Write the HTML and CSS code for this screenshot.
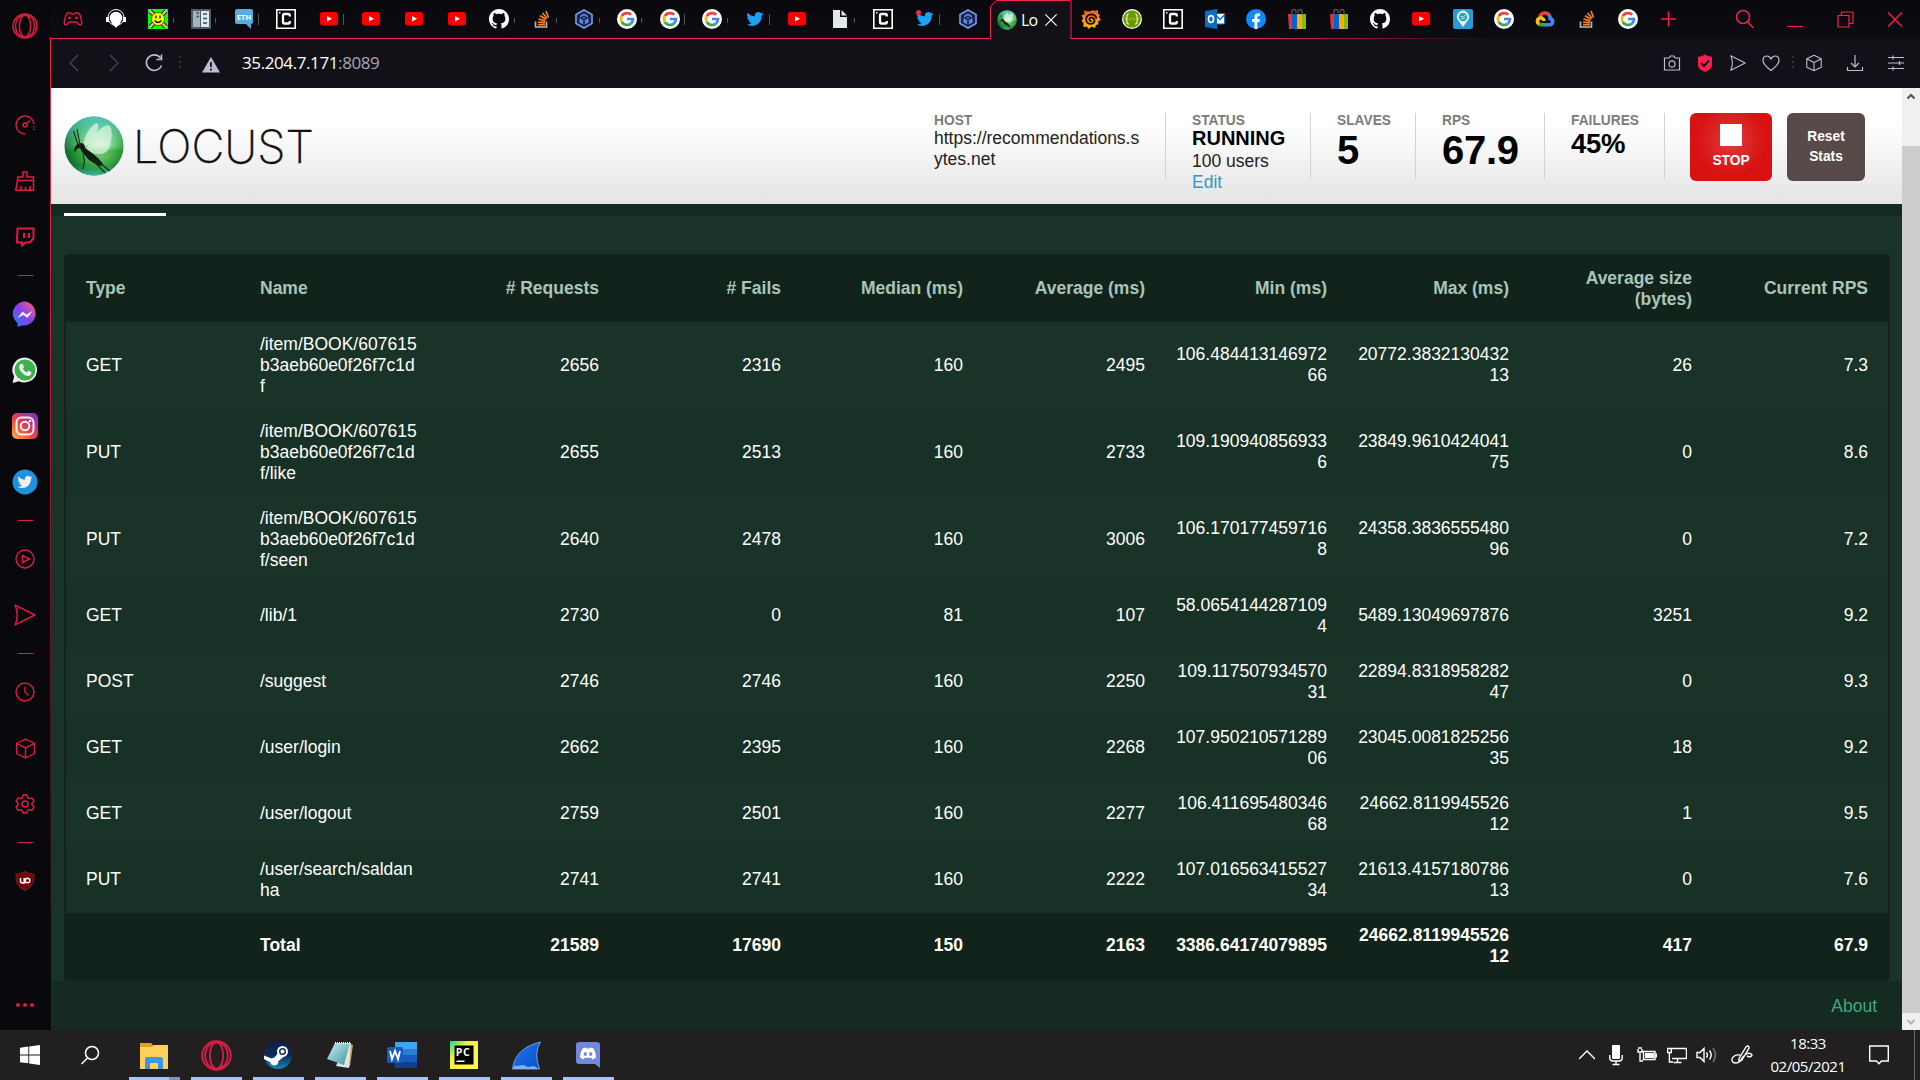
FILE: index.html
```html
<!DOCTYPE html>
<html lang="en">
<head>
<meta charset="utf-8">
<title>Locust</title>
<link rel="stylesheet" href="styles.css">
</head>
<body>
<svg class="sprite" width="0" height="0">
<defs>
<linearGradient id="gMsg" x1="0" y1="1" x2="1" y2="0"><stop offset="0" stop-color="#1488ff"/><stop offset=".5" stop-color="#8a3cf0"/><stop offset="1" stop-color="#ff6a6a"/></linearGradient>
<linearGradient id="gInsta" x1="0" y1="1" x2="1" y2="0"><stop offset="0" stop-color="#fdb845"/><stop offset=".4" stop-color="#ee4a3c"/><stop offset=".7" stop-color="#c02c8c"/><stop offset="1" stop-color="#6a3cc8"/></linearGradient>
<linearGradient id="gOrange" x1="0" y1="0" x2="0" y2="1"><stop offset="0" stop-color="#f05a28"/><stop offset="1" stop-color="#fbca0a"/></linearGradient>
<linearGradient id="gSteam" x1="0" y1="0" x2="0" y2="1"><stop offset="0" stop-color="#111d4e"/><stop offset=".5" stop-color="#0c2a55"/><stop offset="1" stop-color="#1387b8"/></linearGradient>
<linearGradient id="gPy" x1="0" y1="0" x2="1" y2="1"><stop offset="0" stop-color="#21d789"/><stop offset=".35" stop-color="#f5f04a"/><stop offset="1" stop-color="#fcf84a"/></linearGradient>
<linearGradient id="gNote" x1="0" y1="0" x2="1" y2="1"><stop offset="0" stop-color="#cdeef2"/><stop offset="1" stop-color="#3c94a4"/></linearGradient>
<linearGradient id="gFin" x1="0" y1="0" x2="1" y2="1"><stop offset="0" stop-color="#1f78f0"/><stop offset="1" stop-color="#0a4fc8"/></linearGradient>
<radialGradient id="gLoc" cx=".58" cy=".45" r=".56"><stop offset="0" stop-color="#dcf8d8"/><stop offset=".35" stop-color="#98dc9c"/><stop offset=".72" stop-color="#35a03f"/><stop offset="1" stop-color="#126040"/></radialGradient>
<linearGradient id="gTop" x1="0" y1="0" x2="0" y2="1"><stop offset="0" stop-color="#5fd0d8"/><stop offset=".5" stop-color="#5fd0a0" stop-opacity=".25"/><stop offset=".58" stop-color="#0a8a0a" stop-opacity=".5"/><stop offset=".82" stop-color="#20a830" stop-opacity=".2"/><stop offset="1" stop-color="#4fd0c8"/></linearGradient>
</defs>
<symbol id="opera" viewBox="0 0 26 26"><g fill="none" stroke="#e01b46" stroke-width="1.5"><ellipse cx="13" cy="13" rx="12" ry="12"/><ellipse cx="13" cy="13" rx="5.6" ry="11"/><path d="M15 2.2C25 4 25 22 15 23.8M11 2.2C1 4 1 22 11 23.8"/></g></symbol>
<symbol id="pad" viewBox="0 0 20 20"><path fill="none" stroke="#e01b46" stroke-width="1.4" d="M4.500 4h3l1 1h3l1-1h3l2 3 1.300 6.500c.2 3-2.400 3-3.600 1.200L13.500 13h-7l-1.700 1.700c-1.200 1.800-3.800 1.800-3.600-1.200L2.500 7z"/><circle cx="6.500" cy="9" r="1.400" fill="#e01b46"/><circle cx="13.500" cy="9" r="1.400" fill="#e01b46"/></symbol>
<symbol id="alien" viewBox="0 0 20 20"><circle cx="10" cy="8.500" r="8" fill="none" stroke="#fff"/><circle cx="10" cy="9" r="6.300" fill="#fff"/><path fill="#fff" d="M0 8h3v5H0zM17 8h3v5h-3zM5.500 14l9 0-3 3-1.500 2-1.500-2z"/></symbol>
<symbol id="smile" viewBox="0 0 20 20"><path fill="#0f0" d="M0 0h20v20H0z"/><path stroke="#222" stroke-width="4" d="M2 2l16 16M18 2L2 18"/><path stroke="#f4b8a0" stroke-width="2.300" d="M1.500 1.500l17 17M18.500 1.500l-17 17"/><circle cx="10" cy="10" r="6.500" fill="#ff0" stroke="#333" stroke-width=".7"/><path stroke="#111" fill="none" stroke-width="1.300" d="M8 6.500v3M12 6.500v3M6.500 11.500q3.500 4 7 0"/></symbol>
<symbol id="doc" viewBox="0 0 20 20"><path fill="#4c5e6a" d="M0 0h20v20H0z"/><path fill="#a4b4be" d="M2 2h7v16H2z"/><path fill="#e2e9ec" d="M10 2h8v16h-8z"/><path stroke="#3c4e5a" stroke-width="1.700" d="M5.500 4h2.500M5.500 7.500h2.500M12 5h4M12 9.500h4M12 14h4"/></symbol>
<symbol id="cc" viewBox="0 0 20 20"><path fill="#0a0a0d" stroke="#fff" stroke-width="1.600" d="M.8.8h18.400v18.400H.8z"/><path fill="none" stroke="#fff" stroke-width="2.300" d="M13.800 7.500V6.500q0-1.500-1.500-1.500H8.500Q7 5 7 6.500v6.500q0 1.500 1.500 1.500h3.800q1.500 0 1.500-1.500v-1"/><path fill="#fff" d="M3 3h1.500v1.500H3z"/></symbol>
<symbol id="yt" viewBox="0 0 20 20"><rect x="1" y="3" width="18" height="13.500" rx="3" fill="red"/><path fill="#fff" d="M8 7l5 2.800L8 12.600z"/></symbol>
<symbol id="gh" viewBox="0 0 16 16"><path fill="#fff" d="M8 0C3.580 0 0 3.580 0 8c0 3.540 2.290 6.530 5.470 7.590.4.070.55-.17.55-.38 0-.19-.01-.82-.01-1.490-2.010.37-2.530-.49-2.690-.94-.09-.23-.48-.94-.82-1.130-.28-.15-.68-.52-.01-.53.63-.01 1.080.58 1.230.82.72 1.210 1.870.87 2.330.66.07-.52.28-.87.51-1.070-1.780-.2-3.640-.89-3.640-3.950 0-.87.31-1.590.82-2.150-.08-.2-.36-1.020.08-2.120 0 0 .67-.21 2.200.82.64-.18 1.320-.27 2-.27s1.360.09 2 .27c1.530-1.040 2.200-.82 2.200-.82.44 1.100.16 1.920.08 2.120.51.56.82 1.270.82 2.150 0 3.070-1.870 3.750-3.650 3.950.29.25.54.73.54 1.480 0 1.070-.01 1.930-.01 2.200 0 .21.15.46.55.38A8.010 8.010 0 0 0 16 8c0-4.420-3.580-8-8-8z"/></symbol>
<symbol id="so" viewBox="0 0 20 20"><path fill="none" stroke="#b8b8b8" stroke-width="1.600" d="M3.500 12.500v5.500h11v-5.500"/><path stroke="#f48024" stroke-width="1.700" d="M6 15.700h7M6 13l7 .7M6.600 10l6.700 1.900M8 6.700l6 3.600M10.500 4l4.600 5.300M14 2l2.500 6.500"/></symbol>
<symbol id="hex" viewBox="0 0 20 20"><path fill="#182448" stroke="#7c9ae8" stroke-width="1.600" d="M10 1l8 4.500v9L10 19l-8-4.500v-9z"/><path fill="#5a86ee" d="M10 4.500l4 2.300v1.700l-4-2-4 2V6.800zM5.500 9l3.700 2v4.500l-3.700-2zM14.500 9l-3.700 2v4.500l3.700-2zM10 8l1.500.8L10 9.700l-1.500-.9z"/></symbol>
<symbol id="goog" viewBox="0 0 20 20"><circle cx="10" cy="10" r="10" fill="#fff"/><g fill="none" stroke-width="2.700"><path stroke="#ea4335" d="M14.200 5.800A6 6 0 0 0 4.800 7"/><path stroke="#fbbc05" d="M4.800 7a6 6 0 0 0 0 6"/><path stroke="#34a853" d="M4.800 13a6 6 0 0 0 9 1.600"/><path stroke="#4285f4" d="M13.800 14.600A6 6 0 0 0 16 10h-6"/></g></symbol>
<symbol id="bird" viewBox="0 0 24 24"><path d="M23.950 4.570a10 10 0 0 1-2.820.77 4.960 4.960 0 0 0 2.160-2.720c-.95.550-2 .950-3.130 1.180a4.920 4.920 0 0 0-8.380 4.480C7.690 8.090 4.070 6.130 1.640 3.160a4.920 4.920 0 0 0 1.520 6.570 4.900 4.900 0 0 1-2.230-.61v.06a4.920 4.920 0 0 0 3.950 4.830 5 5 0 0 1-2.210.08 4.940 4.940 0 0 0 4.600 3.420A9.870 9.870 0 0 1 0 19.540a13.990 13.990 0 0 0 7.550 2.210c9.050 0 14-7.500 14-13.980 0-.21 0-.42-.02-.63a9.940 9.940 0 0 0 2.460-2.550z"/></symbol>
<symbol id="tw" viewBox="0 0 20 20"><use href="#bird" x="1.500" y="1.500" width="17" height="17" fill="#1da1f2"/></symbol>
<symbol id="file" viewBox="0 0 20 20"><path fill="#e4e8ec" d="M3 1h7v7h7v11H3z"/><path fill="#e4e8ec" d="M11.500 1v5.500H17z"/></symbol>
<symbol id="loc" viewBox="0 0 60 60"><circle cx="30" cy="30" r="29.500" fill="url(#gLoc)"/><circle cx="30" cy="30" r="29.500" fill="url(#gTop)" opacity=".8"/><g fill="#eafbe8" opacity=".65"><path d="M19 31C20 18 29 7 33 7q4 3-4 16-5 7-10 8z"/><path d="M22 34C27 20 38 9 45 9q5 5 1 21-3 8-10 8-9 0-14-4z"/></g><path fill="#111d12" d="M11 31q2-4 7-4 3 1 3 5l7 5 6 5 5 6-2 2-4-1-8-5-7-8-2-4-3 1-2 3-1-2z"/><path fill="none" stroke="#17301c" stroke-width="1.200" d="M14 29L9.500 15M16 29l-3-16M19 38l1.500 8-2 7M28 43l13 14M32 44l14 11"/></symbol>
<symbol id="gra" viewBox="0 0 20 20"><path fill="url(#gOrange)" d="M10 2l2-1 1 1 4-1v3.500l2 1.500-1 2 2 3-2.500 1-.5 3.500-2 .5-1 3-3.500-1.500L7.500 20 6 17.500l-3.500.5v-4L.5 12 2 9.500.5 6 3.500 5.500 3 1.500l4 1z"/><path fill="none" stroke="#0b0b0f" stroke-width="1.700" d="M15.500 9.500q-1-4-5-4.200Q5.500 5.500 5 10.500q.5 4.500 5 4.500 3.500-.5 3.500-3.500-.5-3-3-3-2.500.5-2 2.500.5 1.500 2 1"/></symbol>
<symbol id="swag" viewBox="0 0 20 20"><circle cx="10" cy="10" r="10" fill="#fff"/><circle cx="10" cy="10" r="8.800" fill="#6b9a00"/><path stroke="#e4f0c0" fill="none" stroke-width="1.200" d="M7 5q-2 0-2 2v2l-1 1 1 1v2q0 2 2 2M13 5q2 0 2 2v2l1 1-1 1v2q0 2-2 2M7.300 10h1M9.500 10h1M11.700 10h1"/></symbol>
<symbol id="olk" viewBox="0 0 20 20"><path fill="#fff" stroke="#0a6cc4" d="M10 4.500h9.500v10.500H10z"/><path fill="none" stroke="#0a6cc4" stroke-width="1.500" d="M11 6.500l4 4 4.500-4.500"/><path fill="#0a6cc4" d="M0 2L12 0v20L0 18z"/><ellipse cx="6" cy="10" rx="2.500" ry="3.400" fill="none" stroke="#fff" stroke-width="1.600"/></symbol>
<symbol id="fb" viewBox="0 0 20 20"><circle cx="10" cy="10" r="10" fill="#1188f5"/><path fill="#fff" d="M8.500 20v-7H6v-3h2.500V7.800Q8.500 4.300 12 4.300q1 0 2 .2v2.500h-1.200q-1.400 0-1.400 1.500V10h2.500l-.4 3h-2.100v7z"/></symbol>
<symbol id="bag" viewBox="0 0 20 20"><path fill="#e53238" d="M1 5h5v15H2z"/><path fill="#0064d2" d="M5 5h5v15H5z"/><path fill="#f5af02" d="M10 5h5v15h-5z"/><path fill="#86b817" d="M15 5h4v15h-4z"/><path fill="none" stroke="#555" stroke-width="1.300" d="M5 6V2.500q0-2 2-2t2 2V4M11 4V2.500q0-2 2-2t2 2V6"/></symbol>
<symbol id="pin" viewBox="0 0 20 20"><rect width="20" height="20" rx="2" fill="#2b9cd0"/><path fill="#e2f4f4" d="M10 18L5 11a6 6 0 1 1 10 0z"/><circle cx="10" cy="8" r="4.200" fill="#2aa0a8"/><path stroke="#bfe6e6" fill="none" d="M7 7l3 1 3-2M8 10l4-1"/></symbol>
<symbol id="gcp" viewBox="0 0 20 20"><g fill="none" stroke-width="3.600"><path stroke="#ea4335" d="M5 7.500a5.300 5.300 0 0 1 9.500-1"/><path stroke="#4285f4" d="M14 6q1.500 2 1.200 3.500a3.200 3.200 0 0 1 0 6.200H10"/><path stroke="#34a853" d="M10.500 15.700H5.500l-2-.7"/><path stroke="#fbbc05" d="M4 15a3.300 3.300 0 1 1 5-3"/></g></symbol>
<symbol id="x" viewBox="0 0 16 16"><path stroke="currentColor" stroke-width="1.300" d="M1.500 1.500l13 13M14.500 1.500l-13 13"/></symbol>
<symbol id="mag" viewBox="0 0 20 20"><g fill="none" stroke="currentColor" stroke-width="1.500"><circle cx="8" cy="8" r="6.500"/><path d="M12.500 13l6 6"/></g></symbol>
<symbol id="send" viewBox="0 0 20 20"><path fill="none" stroke="currentColor" stroke-width="1.300" stroke-linejoin="round" d="M1 1l18 9L1 19q4-9 0-18z"/></symbol>
<symbol id="cube" viewBox="0 0 20 20"><path fill="none" stroke="currentColor" stroke-width="1.300" stroke-linejoin="round" d="M10 1l8.500 4v10L10 19l-8.500-4V5zM1.500 5l8.500 4.500L18.500 5M10 9.500V19"/></symbol>
</svg>

<div class="desktop">
<aside class="side">
  <div class="brand"><svg width="26" height="26"><use href="#opera"/></svg></div>
  <div class="slot"><svg width="20" height="20" viewBox="0 0 20 20"><g fill="none" stroke="currentColor" stroke-width="1.400"><path d="M10.500 19A9 9 0 1 1 19 9"/><path d="M19 11v5" stroke-dasharray="1.300 1.500"/><circle cx="10" cy="10" r="2"/><path d="M11.500 8.500L15 5.500"/></g></svg></div>
  <div class="slot"><svg width="20" height="20" viewBox="0 0 20 20"><path fill="none" stroke="currentColor" stroke-width="1.500" d="M8 6V1h4v5h6.500v13.300H.8L3 6h5M3 9.500h15.500M6 19v-4M10.500 19v-3M15 19v-4"/></svg></div>
  <div class="slot"><svg width="20" height="20" viewBox="0 0 20 20"><path fill="none" stroke="currentColor" stroke-width="2" d="M2.500 1.500h16v10l-4 4h-4L7 18.500v-3H2z"/><path stroke="currentColor" stroke-width="2" d="M9 6v5M14 6v5"/></svg></div>
  <div class="sep"></div>
  <div class="slot"><svg width="26" height="26" viewBox="0 0 26 26"><path fill="url(#gMsg)" d="M13 .5a12 12 0 1 1-3 24L5.500 26V22A12 12 0 0 1 13 .5z"/><path fill="#eee" d="M5.500 17l5-6.500 4 3 6-3.500-5 7-4-3z"/></svg></div>
  <div class="slot"><svg width="26" height="26" viewBox="0 0 26 26"><path fill="#f0f0f0" d="M13 .5A12.500 12.500 0 1 1 7 24.200L.5 26l1.700-6.500A12.500 12.500 0 0 1 13 .5z"/><circle cx="13" cy="13" r="10.500" fill="#3db14c"/><path fill="#f0f0f0" d="M8.500 7l2-.3 1.500 3.300-1.200 1.700q1.500 2.800 4 3.700l1.400-1.700 3.300 1.600q0 3-3 3.700-4 0-7.500-4.500-3.500-4.500-.5-7.500z"/></svg></div>
  <div class="slot"><svg width="26" height="26" viewBox="0 0 26 26"><rect width="26" height="26" rx="5" fill="url(#gInsta)"/><g fill="none" stroke="#f4f4f4" stroke-width="2"><rect x="4.500" y="4.500" width="17" height="17" rx="5"/><circle cx="13" cy="13" r="4.300"/></g><circle cx="18" cy="8" r="1.300" fill="#fff"/></svg></div>
  <div class="slot"><svg width="26" height="26" viewBox="0 0 26 26"><circle cx="13" cy="13" r="12.500" fill="#1d93e0"/><use href="#bird" x="5.500" y="5.500" width="15" height="15" fill="#eee"/></svg></div>
  <div class="sep"></div>
  <div class="slot"><svg width="20" height="20" viewBox="0 0 20 20"><g fill="none" stroke="currentColor" stroke-width="1.400"><circle cx="10" cy="10" r="9"/><path d="M7.500 6.500v7L14.500 10z"/></g></svg></div>
  <div class="slot"><svg width="22" height="22"><use href="#send"/></svg></div>
  <div class="sep"></div>
  <div class="slot"><svg width="20" height="20" viewBox="0 0 20 20"><g fill="none" stroke="currentColor" stroke-width="1.400"><circle cx="10" cy="10" r="9"/><path d="M10 5v5l3.500 3.500"/></g></svg></div>
  <div class="slot"><svg width="21" height="21"><use href="#cube"/></svg></div>
  <div class="slot"><svg width="20" height="20" viewBox="0 0 20 20"><g fill="none" stroke="currentColor" stroke-width="1.400" stroke-linejoin="round"><path d="M8 1h4l.7 2.700 1.800 1L17 4l2 3.300L17 9.500v1.500l2 2-2 3.300-2.700-.8-1.700 1L12 19H8l-.7-2.500-1.700-1-2.600.8-2-3.300 2-2V9.500l-2-2.200L3 4l2.700.7 1.700-1z"/><circle cx="10" cy="10" r="3"/></g></svg></div>
  <div class="sep"></div>
  <div class="slot"><svg width="20" height="20" viewBox="0 0 20 20"><path fill="#7c0008" stroke="#5c4040" stroke-width=".7" d="M10 .5q4 2.500 9 2.700Q20 16 10 19.500 0 16 1 3.200 6 3 10 .5z"/><path fill="none" stroke="#fff" stroke-width="1.500" d="M5.500 7v3q0 2 2 2h1.700V7"/><circle cx="12.500" cy="9.500" r="2.300" fill="none" stroke="#fff" stroke-width="1.500"/></svg></div>
  <div class="more"><i></i><i></i><i></i></div>
</aside>

<main class="window">
  <div class="strip">
    <div class="tabs wide">
      <span><svg><use href="#pad"/></svg></span><span><svg><use href="#alien"/></svg></span><span class="b"><svg><use href="#smile"/></svg></span><span class="b"><svg><use href="#doc"/></svg></span><span class="b tallmark"><svg viewBox="0 0 20 20"><path fill="#58ace0" d="M3 0h14q2 0 2 2v11q0 2-2 2v5l-5-5H3q-2 0-2-2V2q0-2 2-2z"/><text x="10" y="11" fill="#fff" font-size="7.500" font-weight="700" text-anchor="middle" font-family="Open Sans">ETH</text></svg></span><span><svg><use href="#cc"/></svg></span><span class="b tallmark"><svg><use href="#yt"/></svg></span><span><svg><use href="#yt"/></svg></span><span><svg><use href="#yt"/></svg></span><span><svg><use href="#yt"/></svg></span><span class="b"><svg><use href="#gh"/></svg></span><span class="b"><svg><use href="#so"/></svg></span><span class="b"><svg><use href="#hex"/></svg></span><span class="b"><svg><use href="#goog"/></svg></span><span class="b tallmark"><svg><use href="#goog"/></svg></span><span class="b"><svg><use href="#goog"/></svg></span><span class="b tallmark"><svg><use href="#tw"/></svg></span><span><svg><use href="#yt"/></svg></span><span class="b"><svg><use href="#file"/></svg></span><span><svg><use href="#cc"/></svg></span><span class="b tallmark"><svg viewBox="0 0 20 20"><use href="#tw"/><circle cx="3.500" cy="3.500" r="2.500" fill="#f0244e"/></svg></span><span><svg><use href="#hex"/></svg></span>
    </div>
    <div class="active"><svg class="edge" width="83" height="39" viewBox="0 0 83 39"><path fill="#121117" d="M1.500 39V6L7.500.5H81.500V39z"/><path fill="none" stroke="#f0244e" d="M0 38.500h.5l1-1V6.500l6-6h74l.5.5v37.500h1"/></svg><svg class="fav"><use href="#loc"/></svg><b>Lo</b><svg class="close"><use href="#x"/></svg></div>
    <div class="tabs rest">
      <span><svg><use href="#gra"/></svg></span><span><svg><use href="#swag"/></svg></span><span><svg><use href="#cc"/></svg></span><span><svg><use href="#olk"/></svg></span><span><svg><use href="#fb"/></svg></span><span><svg><use href="#bag"/></svg></span><span><svg><use href="#bag"/></svg></span><span><svg><use href="#gh"/></svg></span><span><svg><use href="#yt"/></svg></span><span><svg><use href="#pin"/></svg></span><span><svg><use href="#goog"/></svg></span><span><svg><use href="#gcp"/></svg></span><span><svg><use href="#so"/></svg></span><span><svg><use href="#goog"/></svg></span>
      <span class="plus"><svg viewBox="0 0 20 20"><path stroke="currentColor" stroke-width="1.400" d="M9.500 2.500v15M2 10h15"/></svg></span>
    </div>
    <div class="winctl">
      <span><svg width="20" height="20"><use href="#mag"/></svg></span>
      <span><svg width="16" height="18" viewBox="0 0 16 18"><path stroke="currentColor" stroke-width="1.200" d="M0 16.500h16"/></svg></span>
      <span><svg width="17" height="17" viewBox="0 0 17 17"><path fill="none" stroke="currentColor" stroke-width="1.200" d="M1 4.500h11v11.500H1zM4.500 4.500V1H16v11.500h-4"/></svg></span>
      <span><svg width="18" height="17" preserveAspectRatio="none"><use href="#x"/></svg></span>
    </div>
  </div>

  <div class="address">
    <div class="nav">
      <svg class="dim" width="40" height="20" viewBox="-10 0 40 20"><path d="M14 2l-8 8 8 8"/></svg>
      <svg class="dim" width="40" height="20" viewBox="-10 0 40 20"><path d="M6 2l8 8-8 8"/></svg>
      <svg width="40" height="20" viewBox="-10 0 40 20"><path stroke-width="1.600" d="M17.500 12.500A7.800 7.800 0 1 1 16.500 5M17.500 1.500V6.500h-5"/></svg>
      <svg class="dim" width="12" height="16" viewBox="0 0 12 16"><path stroke-dasharray="2 3" d="M6 1v13"/></svg>
      <svg class="warn" width="18" height="16" viewBox="0 0 18 16"><path fill="#c0bbd0" stroke="none" d="M9 0l9 15.500H0z"/><path stroke="#121117" stroke-width="1.800" d="M9 5v5M9 11.500v2"/></svg>
    </div>
    <div class="url">35.204.7.171<span>:8089</span></div>
    <div class="tools">
      <svg viewBox="0 0 20 20"><path d="M2.500 5H7l1.500-2H12l1 2h4.500v12h-15z"/><ellipse cx="10" cy="11" rx="3" ry="3.200"/></svg>
      <svg viewBox="0 0 20 20"><path fill="#fa1e4e" stroke="none" d="M10 1.500q3.500 2.200 7 2.200v8.300q0 4-7 7-7-3-7-7V3.700q3.500 0 7-2.200z"/><path stroke="#121117" stroke-width="2" d="M6 10l3 3 5-5.500"/></svg>
      <svg viewBox="0 0 20 20"><use href="#send" x="2" y="2" width="16" height="16"/></svg>
      <svg viewBox="0 0 20 20"><path d="M10 17.500Q2 11.500 2 7.500 2 3 6 3q2.500 0 4 3 1.500-3 4-3 4 0 4 4.500 0 4-8 10z"/></svg>
      <svg class="dim dots" viewBox="0 0 10 16"><path stroke-dasharray="2 3" d="M5 1v13"/></svg>
      <svg viewBox="0 0 20 20"><use href="#cube" x="1.500" y="1.500" width="17" height="17"/></svg>
      <svg class="gap" viewBox="0 0 20 20"><path d="M10 2v12M6 10l4 4 4-4M2.500 14v3.500h15V14"/></svg>
      <svg class="gap" viewBox="0 0 20 20"><path d="M2 4.500h16M2 10h16M2 15.500h16M7 2.500v4M13.500 8v4M7 13.500v4"/></svg>
    </div>
  </div>

  <div class="view">
    <div class="page">
      <header class="top">
        <div class="logo"><svg width="60" height="60"><use href="#loc"/></svg><svg width="190" height="60" viewBox="0 0 190 60"><text x="-1" y="46.500" textLength="181" lengthAdjust="spacingAndGlyphs">LOCUST</text></svg></div>
        <div class="boxes">
          <div class="box host"><label>HOST</label><p>https://recommendations.s<br>ytes.net</p></div>
          <div class="box status"><label>STATUS</label><strong>RUNNING</strong><p>100 users</p><a>Edit</a></div>
          <div class="box slaves"><label>SLAVES</label><em>5</em></div>
          <div class="box rps"><label>RPS</label><em>67.9</em></div>
          <div class="box fails"><label>FAILURES</label><i>45%</i></div>
          <button class="stop"><span></span>STOP</button>
          <button class="reset">Reset<br>Stats</button>
        </div>
      </header>
      <nav class="menu"><span></span></nav>
      <section class="stats">
        <table>
          <colgroup><col class="c1"><col class="c2"><col class="c3"><col class="c4"><col class="c4"><col class="c4"><col class="c4"><col class="c4"><col class="c5"><col></colgroup>
          <thead><tr><th>Type</th><th>Name</th><th># Requests</th><th># Fails</th><th>Median (ms)</th><th>Average (ms)</th><th>Min (ms)</th><th>Max (ms)</th><th>Average size<br>(bytes)</th><th>Current RPS</th></tr></thead>
          <tbody>
            <tr class="tall"><td>GET</td><td>/item/BOOK/607615<br>b3aeb60e0f26f7c1d<br>f</td><td>2656</td><td>2316</td><td>160</td><td>2495</td><td>106.484413146972<br>66</td><td>20772.3832130432<br>13</td><td>26</td><td>7.3</td></tr>
            <tr class="tall"><td>PUT</td><td>/item/BOOK/607615<br>b3aeb60e0f26f7c1d<br>f/like</td><td>2655</td><td>2513</td><td>160</td><td>2733</td><td>109.190940856933<br>6</td><td>23849.9610424041<br>75</td><td>0</td><td>8.6</td></tr>
            <tr class="tall"><td>PUT</td><td>/item/BOOK/607615<br>b3aeb60e0f26f7c1d<br>f/seen</td><td>2640</td><td>2478</td><td>160</td><td>3006</td><td>106.170177459716<br>8</td><td>24358.3836555480<br>96</td><td>0</td><td>7.2</td></tr>
            <tr><td>GET</td><td>/lib/1</td><td>2730</td><td>0</td><td>81</td><td>107</td><td>58.0654144287109<br>4</td><td>5489.13049697876</td><td>3251</td><td>9.2</td></tr>
            <tr><td>POST</td><td>/suggest</td><td>2746</td><td>2746</td><td>160</td><td>2250</td><td>109.117507934570<br>31</td><td>22894.8318958282<br>47</td><td>0</td><td>9.3</td></tr>
            <tr><td>GET</td><td>/user/login</td><td>2662</td><td>2395</td><td>160</td><td>2268</td><td>107.950210571289<br>06</td><td>23045.0081825256<br>35</td><td>18</td><td>9.2</td></tr>
            <tr><td>GET</td><td>/user/logout</td><td>2759</td><td>2501</td><td>160</td><td>2277</td><td>106.411695480346<br>68</td><td>24662.8119945526<br>12</td><td>1</td><td>9.5</td></tr>
            <tr><td>PUT</td><td>/user/search/saldan<br>ha</td><td>2741</td><td>2741</td><td>160</td><td>2222</td><td>107.016563415527<br>34</td><td>21613.4157180786<br>13</td><td>0</td><td>7.6</td></tr>
            <tr class="total"><td></td><td>Total</td><td>21589</td><td>17690</td><td>150</td><td>2163</td><td>3386.64174079895</td><td>24662.8119945526<br>12</td><td>417</td><td>67.9</td></tr>
          </tbody>
        </table>
      </section>
      <footer class="foot"><a>About</a></footer>
    </div>
    <div class="scroll"><svg viewBox="0 0 18 17"><path stroke="#505050" d="M5.500 10.500L9 7l3.500 3.500"/></svg><div class="thumb"></div><svg viewBox="0 0 18 17"><path stroke="#b4b4b4" d="M5.500 7L9 10.500 12.500 7"/></svg></div>
  </div>
</main>
</div>

<div class="taskbar">
  <div class="apps">
    <span><svg width="20" height="20" viewBox="0 0 20 20"><path fill="#fff" d="M0 2.800L8.300 1.600V9.500H0zM9.200 1.500L20 0v9.500H9.200zM0 10.400h8.300v7.900L0 17.200zM9.200 10.400H20V20L9.200 18.500z"/></svg></span>
    <span><svg class="flip" width="20" height="20"><use href="#mag"/></svg></span>
    <span class="on two"><svg width="28" height="28" viewBox="0 -2 28 28"><path fill="#e2a018" d="M0 0h11l3 3v6H0z"/><path fill="#ffd15c" d="M0 4h12l2-2h14v24H0z"/><path fill="#3a9ae0" d="M5 26V16q0-2 2-2h14q2 0 2 2v10h-5v-6h-8v6z"/></svg></span>
    <span class="on"><svg width="31" height="31"><use href="#opera"/></svg></span>
    <span class="on"><svg width="28" height="28" viewBox="0 0 28 28"><circle cx="14" cy="14" r="14" fill="url(#gSteam)"/><path fill="#fff" d="M0 14.500l7.500 3 3-1 4-5 5 4.500-5 4q-.5 4.500-4 4.500-3.500 0-4.300-3.200L0 18z"/><circle cx="18.500" cy="10.500" r="4.500" fill="#16305c" stroke="#fff" stroke-width="2"/><circle cx="18.500" cy="10.500" r="2" fill="#fff"/></svg></span>
    <span class="on"><svg width="28" height="28" viewBox="0 0 28 28"><path fill="#d4a24a" d="M22 2l5 2-3 21-3 1z"/><path fill="#dce6e6" d="M20 2h5l-2 25-13-2z"/><path fill="url(#gNote)" d="M9 2h15l-6 22L1 18z"/><path stroke="#fff" stroke-dasharray="1 1" stroke-width="2" d="M9 2h15"/></svg></span>
    <span class="on"><svg width="30" height="28" viewBox="0 0 30 28"><path fill="#41a5ee" d="M8 1h22v7H8z"/><path fill="#2b7cd3" d="M8 8h22v6H8z"/><path fill="#185abd" d="M8 14h22v7H8z"/><path fill="#103f91" d="M8 21h22v6H8z"/><rect y="6" width="16" height="16" rx="1.500" fill="#185abd"/><path fill="none" stroke="#fff" stroke-width="1.900" d="M3 10l2 8 3-8 3 8 2-8"/></svg></span>
    <span class="on"><svg width="28" height="28" viewBox="0 0 28 28"><path fill="url(#gPy)" d="M0 0h28v28H0z"/><path fill="#000" d="M4.500 4.500h19v19h-19z"/><text x="5.800" y="14.500" fill="#fff" font-size="10.500" font-weight="700" font-family="Open Sans" textLength="14">PC</text><path fill="#fff" d="M6.500 19.500h8V21h-8z"/></svg></span>
    <span class="on"><svg width="29" height="29" viewBox="0 0 29 29"><path fill="url(#gFin)" stroke="#8cb4e8" stroke-width=".8" d="M.5 28Q3 7 28.500 1q-7 11-1 27z"/><path fill="#7cb0f4" d="M1 28q1-5 4-3l6-1 5 2 6-1 5 3z"/></svg></span>
    <span class="on"><svg width="24" height="26" viewBox="0 0 24 26"><path fill="#7289da" d="M3 0h18q3 0 3 3v23l-5-4H3q-3 0-3-3V3q0-3 3-3z"/><path fill="#fff" d="M6.500 6.500l3.500-1 .5 1h3l.5-1 3.500 1q2.500 4 2.500 9l-3.500 2-1.300-1.700H8.800L7.500 17.500 4 15.500q0-5 2.500-9z"/><ellipse cx="9.300" cy="12" rx="1.600" ry="1.900" fill="#7289da"/><ellipse cx="14.700" cy="12" rx="1.600" ry="1.900" fill="#7289da"/></svg></span>
  </div>
  <div class="tray">
    <svg width="16" height="20" viewBox="0 0 16 20"><path d="M0 14l8-8 8 8"/></svg>
    <svg width="14" height="22" viewBox="0 0 14 22"><rect x="3" y="1" width="8" height="14" rx="1" fill="#fff" stroke="none"/><path d="M.8 11v3q0 3 3 3h6.400q3 0 3-3v-3M7 17v3.500M3.500 20.500h7"/></svg>
    <svg class="batt" width="20" height="20" viewBox="0 0 20 20"><path d="M6.500 6.500H18v8H6.500zM19.300 8.500v4M3 8v8h3M1 4v3h4V4M2 2v2M4 2v2"/><path fill="#fff" stroke="none" d="M8 8h9v5H8z"/></svg>
    <svg class="mon" width="20" height="20" viewBox="0 0 20 20"><path d="M5 3.500h14.500v10H5M10.500 13.500v4M6.500 17.500h8M.5 3.500h3.800v4H.5zM2.400 7.500v9.500H6"/></svg>
    <svg width="22" height="20" viewBox="0 0 22 20"><path d="M1 7.500h3l4-4v13l-4-4H1zM10.500 7.500q2 2.500 0 5M13.500 5.500q3.500 4.500 0 9"/><path stroke="#777" d="M17 3q5 7 0 14"/></svg>
    <svg class="pen" width="22" height="20" viewBox="0 0 22 20"><path d="M8 13.500L15 2q2-2 3 0 .5 1-.500 2L11 15l-3 2zM9 10q-6-1-8 4-.500 4 4 4 4 0 6-5l4-4q4-2 6 1-1 3-5 1"/></svg>
    <div class="clock">18:33<br>02/05/2021</div>
    <svg class="note" width="20" height="20" viewBox="0 0 20 20"><path d="M.7 1h18.600v15H12.500L10 18.700 7.500 16H.7z"/></svg>
    <i class="peek"></i>
  </div>
</div>
</body>
</html>
```
FILE: styles.css
```css
* { box-sizing: border-box; }
body { margin: 0; width: 1920px; height: 1080px; overflow: hidden; background: #09080d; font-family: "Liberation Sans", Arial, sans-serif; }
.sprite { position: absolute; }
svg { display: block; flex: none; }
p { margin: 0; }

.desktop { display: grid; grid-template-columns: 51px 1fr; height: 1030px; }

/* browser sidebar */
.side { display: flex; flex-direction: column; align-items: center; color: #e01b46; background: #09080d; padding-right: 1px; height: 1030px; }
.brand { height: 97px; padding-top: 13px; }
.slot { height: 56px; display: flex; align-items: center; }
.sep { width: 15px; height: 21px; display: flex; align-items: center; }
.sep::before { content: ""; width: 15px; height: 1px; background: #e01b46; }
.more { display: flex; gap: 3px; margin-top: auto; padding-bottom: 23px; }
.more i { width: 4px; height: 4px; border-radius: 2px; background: #e01b46; }

/* tab strip */
.window { display: flex; flex-direction: column; min-width: 0; height: 1030px; border-left: 1px solid; border-image: linear-gradient(#09080d 38px, #f0244e 38px, #c81b40 35%, #09080d 92%) 1; margin-left: -1px; }
.strip { display: flex; height: 39px; color: #fa1e4e; padding-left: 1px; background: linear-gradient(90deg, #f0244e 1190px, transparent 1450px) left bottom / 100% 1px no-repeat, linear-gradient(#09080d, #0d0c12); }
.tabs { display: flex; height: 38px; }
.tabs span { width: 41.350px; height: 38px; display: flex; align-items: center; justify-content: center; position: relative; }
.tabs.wide span { width: 42.600px; }
.tabs.rest { margin-left: -1px; }
.tabs svg { width: 20px; height: 20px; }
.tabs .b::after { content: ""; position: absolute; right: 6px; top: 18px; width: 1px; height: 5px; background: #55535c; }
.tabs .tallmark::after { top: 14px; height: 11px; }
.active { position: relative; display: flex; align-items: center; width: 82px; height: 39px; margin-left: -.2px; padding-left: 8px; }
.active .edge { position: absolute; left: 0; top: 0; }
.active .fav { position: relative; width: 20px; height: 20px; }
.active b { position: relative; font: 16px "Open Sans", sans-serif; letter-spacing: -.8px; color: #fff; margin-left: 4px; width: 17px; }
.active .close { position: relative; width: 14px; height: 14px; color: #fff; margin-left: 6px; }
.winctl { display: flex; margin-left: auto; height: 38px; }
.winctl span { width: 50px; display: flex; align-items: center; justify-content: center; }

/* address bar */
.address { display: flex; align-items: center; height: 49px; background: #121117; padding: 0 14px 1px 3px; }
.address svg { fill: none; stroke: #c0bbd0; stroke-width: 1.2; color: #c0bbd0; }
.address .dim { stroke: #4a4852; }
.nav { display: flex; align-items: center; }
.warn { margin: 4px 22px 0 16px; }
.url { font: 17px/24px "Open Sans", "Noto Sans", sans-serif; letter-spacing: -.4px; color: #fff; margin-top: -1px; }
.url span { color: #a9a4b8; }
.tools { display: flex; align-items: center; margin-left: auto; gap: 12.800px; }
.tools svg { width: 20px; height: 20px; }
.tools .dots { width: 10px; height: 16px; margin: 0 -6px; }
.tools .gap { margin-left: 8px; }

/* page */
.view { display: flex; height: 942px; }
.page { flex: 1; background: #1a3329; min-width: 0; }
.top { display: flex; justify-content: space-between; height: 116px; padding: 25px 37px 0 13px; background: linear-gradient(#fff 30%, #e6e6e6 95%); }
.logo { display: flex; align-items: center; height: 60px; margin-top: 3px; gap: 10px; }
.logo text { font: 200 45.500px Inter, Lato, sans-serif; fill: #111; stroke: #111; stroke-width: .35px; }
.boxes { display: flex; color: #000; font-size: 17.500px; line-height: 21px; }
.box { height: 66px; border-right: 1px solid #d2d2d2; padding-left: 26px; white-space: nowrap; }
.box label, .box strong, .box em, .box i, .box a { display: block; font-style: normal; font-weight: 700; }
.box label { font-size: 13.750px; line-height: 15px; color: #7c7c7c; }
.box p { color: #222; }
.box strong { font-size: 20px; line-height: 21px; margin-bottom: 2px; }
.box em { font-size: 40px; line-height: 44px; letter-spacing: -.3px; }
.box i { font-size: 27.500px; line-height: 32px; letter-spacing: -.3px; }
.box a { font-weight: 400; color: #3c94c8; }
.host { width: 258px; }
.status { width: 145px; }
.slaves { width: 105px; }
.rps { width: 129px; }
.fails { width: 120px; }
.boxes button { border: 0; border-radius: 6px; height: 68px; padding: 0; color: #fff; font: 700 13.750px/20px "Liberation Sans", Arial, sans-serif; }
.boxes .stop { width: 82px; margin-left: 25px; padding-top: 1px; background: radial-gradient(circle at 50% 40%, #e03a3a, #d81212 60%); }
.stop span { display: block; width: 22px; height: 22px; margin: 0 auto 5px; background: #fff; }
.reset { width: 78px; margin-left: 15px; background: #584a48; }
.menu { height: 12px; padding: 9px 13px 0; background: #152b22; }
.menu span { display: block; width: 102px; height: 3px; background: #fff; }
.stats { padding: 38px 12px 0 13px; }
table { width: 100%; table-layout: fixed; border-collapse: separate; border-spacing: 0; border: 2px solid #12231b; border-top: 0; border-radius: 4px; background: #12231b; color: #fff; font-size: 17.500px; line-height: 21px; }
.c1 { width: 174px; }
.c2 { width: 197px; }
.c3, .c4 { width: 182px; }
.c5 { width: 183px; }
th, td { height: 66px; padding: 0 20px 1px 0; text-align: right; white-space: nowrap; vertical-align: middle; }
th { height: 68px; padding: 1px 20px 0 0; color: #a9c5ba; }
th:nth-child(-n+2), td:nth-child(-n+2) { text-align: left; padding-right: 0; padding-left: 20px; }
.tall td { height: 87px; }
tbody tr { background: #1a3329; }
tbody tr:nth-child(even) { background: #173126; }
tbody .total { background: #12231b; font-weight: 700; }
.foot { height: 49px; padding: 15px 25px 0; text-align: right; background: #152b22; font-size: 17.500px; line-height: 21px; color: #3fa87e; }
.scroll { width: 18px; background: #f0f0f0; display: flex; flex-direction: column; }
.scroll svg { width: 18px; height: 17px; fill: none; stroke-width: 2; }
.thumb { flex: 1; margin-top: 41px; background: #cdcdcd; }

/* taskbar */
.taskbar { display: flex; justify-content: space-between; height: 50px; background: #211f1f; }
.apps { display: flex; }
.apps span { width: 62px; display: flex; align-items: center; justify-content: center; position: relative; }
.apps span:nth-child(-n+2) { width: 60px; color: #fff; }
.apps .two { margin-left: 3px; }
.apps .on::after { content: ""; position: absolute; left: 6px; bottom: 0; width: 51px; height: 3px; background: #a9c5fb; }
.apps .two::after { background: linear-gradient(90deg, #a9c5fb 40px, #8294bd 40px); }
.flip { transform: scaleX(-1); }
.tray { display: flex; align-items: center; color: #fff; }
.tray svg { fill: none; stroke: #fff; stroke-width: 1.400; margin-right: 14px; }
.tray .batt { margin-right: 10px; }
.tray .mon { margin-right: 9px; }
.tray .pen { margin-left: -1px; margin-right: 17px; }
.clock { width: 76px; text-align: center; white-space: nowrap; font: 15px/23px "Open Sans", sans-serif; letter-spacing: -.45px; }
.tray .note { margin: 0 25px 0 23px; }
.peek { width: 1px; height: 50px; background: #6a6868; margin-right: 5px; }
```
